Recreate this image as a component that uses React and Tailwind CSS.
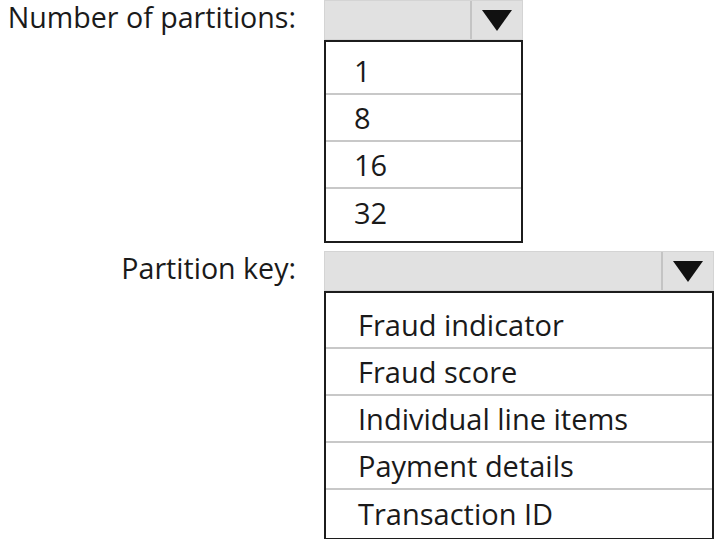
import React from "react";

const Arrow = () => (
    <svg width="30" height="21" viewBox="0 0 30 21">
        <polygon points="0,0 30,0 15,21" fill="#111" />
    </svg>
);

const Dropdown = ({ width, options, padTop, padBottom, textPad }) => (
    <div className="flex flex-col" style={{ width }}>
        {/* closed select header */}
        <div className="flex h-[40px] bg-[#e1e1e1] border border-[#d4d4d4]">
            <div className="flex-1 border-r-2 border-[#c4c4c4]" />
            <div className="w-[50px] flex items-center justify-center">
                <Arrow />
            </div>
        </div>
        {/* open list */}
        <div className={`border-2 border-[#1c1c1c] bg-white ${padTop} ${padBottom}`}>
            {options.map((opt, i) => (
                <div
                    key={opt}
                    className={`h-[47px] flex items-center ${textPad} ${i < options.length - 1 ? "border-b-2 border-[#c8c8c8]" : ""}`}
                >
                    {opt}
                </div>
            ))}
        </div>
    </div>
);

export default function App() {
    return (
        <div
            className="w-[714px] h-[539px] bg-white text-[#1a1a1a] text-[29px] leading-none overflow-hidden"
            style={{ fontFamily: '"Open Sans", "Noto Sans", sans-serif' }}
        >
            <div className="flex">
                <div className="w-[324px] pr-[28px] pb-[5px] h-[40px] flex items-center justify-end whitespace-nowrap text-[28.6px]">
                    Number of partitions:
                </div>
                <Dropdown
                    width={199}
                    options={["1", "8", "16", "32"]}
                    padTop="pt-[6px]"
                    padBottom="pb-[5px]"
                    textPad="pl-[28px]"
                />
            </div>
            <div className="flex mt-[8px]">
                <div className="w-[324px] pr-[28px] pb-[5px] h-[40px] flex items-center justify-end whitespace-nowrap text-[28.6px]">
                    Partition key:
                </div>
                <Dropdown
                    width={390}
                    options={["Fraud indicator", "Fraud score", "Individual line items", "Payment details", "Transaction ID"]}
                    padTop="pt-[9px]"
                    padBottom="pb-[1px]"
                    textPad="pl-[32px]"
                />
            </div>
        </div>
    );
}
